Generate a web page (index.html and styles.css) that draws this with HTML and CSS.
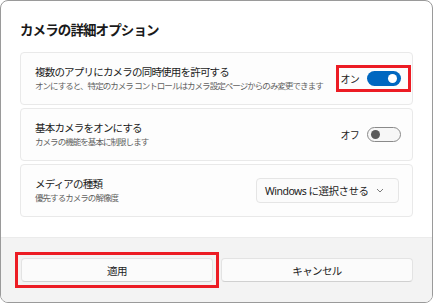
FILE: index.html
```html
<!DOCTYPE html>
<html lang="ja">
<head>
<meta charset="utf-8">
<link rel="stylesheet" href="styles.css">
</head>
<body>
<div class="window">
  <div class="content">
    <h1 class="title">カメラの詳細オプション</h1>
    <div class="cards">
      <div class="card">
        <div class="text">
          <div class="label">複数のアプリにカメラの同時使用を許可する</div>
          <div class="desc">オンにすると、特定のカメラ コントロールはカメラ設定ページからのみ変更できます</div>
        </div>
        <div class="control marked">
          <span class="state">オン</span>
          <span class="toggle on"><span class="knob"></span></span>
        </div>
      </div>
      <div class="card">
        <div class="text">
          <div class="label">基本カメラをオンにする</div>
          <div class="desc">カメラの機能を基本に制限します</div>
        </div>
        <div class="control">
          <span class="state">オフ</span>
          <span class="toggle off"><span class="knob"></span></span>
        </div>
      </div>
      <div class="card">
        <div class="text">
          <div class="label">メディアの種類</div>
          <div class="desc">優先するカメラの解像度</div>
        </div>
        <div class="select">
          <span class="select-text">Windows に選択させる</span>
          <svg class="chevron" width="8" height="5" viewBox="0 0 8 5"><path d="M1 1 L4 4 L7 1" fill="none" stroke="#6b6b6b" stroke-width="0.9"/></svg>
        </div>
      </div>
    </div>
  </div>
  <div class="footer">
    <div class="btn-frame"><button class="btn">適用</button></div>
    <button class="btn">キャンセル</button>
  </div>
</div>
</body>
</html>
```

FILE: styles.css
```css
* { box-sizing: border-box; }
html, body { margin: 0; padding: 0; background: #ffffff; }
body {
  font-family: "Noto Sans", "Noto Sans CJK JP", sans-serif;
  color: #1b1b1b;
}
.window {
  width: 433px;
  height: 303px;
  border: 1px solid #9a9a9a;
  border-radius: 8px;
  overflow: hidden;
  display: flex;
  flex-direction: column;
  background: #ffffff;
}
.content {
  flex: 1;
  padding: 19px 19px 0 19px;
}
.title {
  margin: 0 0 12px 0;
  font-size: 13.5px;
  line-height: 20px;
  font-weight: 600;
  letter-spacing: -0.9px;
  color: #1a1a1a;
}
.cards {
  display: flex;
  flex-direction: column;
  gap: 3px;
}
.card {
  height: 53px;
  display: flex;
  align-items: center;
  justify-content: space-between;
  padding: 0 11px 0 14px;
  background: #fdfdfd;
  border: 1px solid #e9e9e9;
  border-radius: 4px;
}
.text { display: flex; flex-direction: column; gap: 1px; }
.label {
  font-size: 10.5px;
  line-height: 13px;
  letter-spacing: -0.8px;
  color: #1b1b1b;
}
.desc {
  font-size: 8.5px;
  line-height: 11px;
  letter-spacing: -0.95px;
  color: #616161;
}
.control {
  display: flex;
  align-items: center;
  gap: 8px;
  padding: 3px 0 3px 2px;
}
.control.marked {
  outline: 3px solid #ec1c24;
  padding-right: 7px;
  margin-right: -7px;
}
.state {
  font-size: 10px;
  letter-spacing: -0.8px;
  color: #1b1b1b;
}
.toggle {
  position: relative;
  display: inline-block;
  width: 34px;
  height: 15px;
  border-radius: 8px;
}
.toggle.on { background: #0067c0; }
.toggle.off { background: #f7f7f7; border: 1px solid #8a8a8a; }
.knob {
  position: absolute;
  top: 50%;
  width: 9px;
  height: 9px;
  margin-top: -4.5px;
  border-radius: 50%;
}
.toggle.on .knob { right: 4px; background: #ffffff; }
.toggle.off .knob { left: 3px; background: #5c5c5c; }
.select {
  width: 143px;
  height: 25px;
  display: flex;
  align-items: center;
  justify-content: space-between;
  padding: 0 14px 0 8px;
  margin-right: 2px;
  background: #fbfbfb;
  border: 1px solid #e5e5e5;
  border-radius: 4px;
  font-size: 10.5px;
  letter-spacing: -0.5px;
  color: #1b1b1b;
}
.chevron { display: block; }
.footer {
  height: 65px;
  padding: 20px 19px 0 20px;
  background: #f3f3f3;
  border-top: 1px solid #ebebeb;
  display: flex;
  gap: 2px;
  align-items: flex-start;
}
.btn-frame {
  flex: none;
  width: 204px;
  display: flex;
  margin: -6px 0 -6px -6px;
  padding: 3px;
  border: 3px solid #ec1c24;
}
.btn {
  flex: 1;
  height: 24px;
  font-family: "Noto Sans", "Noto Sans CJK JP", sans-serif;
  font-size: 10.5px;
  font-weight: 400;
  letter-spacing: -0.6px;
  color: #1b1b1b;
  background: #fbfbfb;
  border: 1px solid #e3e3e3;
  border-bottom-color: #d0d0d0;
  border-radius: 4px;
  padding: 0;
}
```
